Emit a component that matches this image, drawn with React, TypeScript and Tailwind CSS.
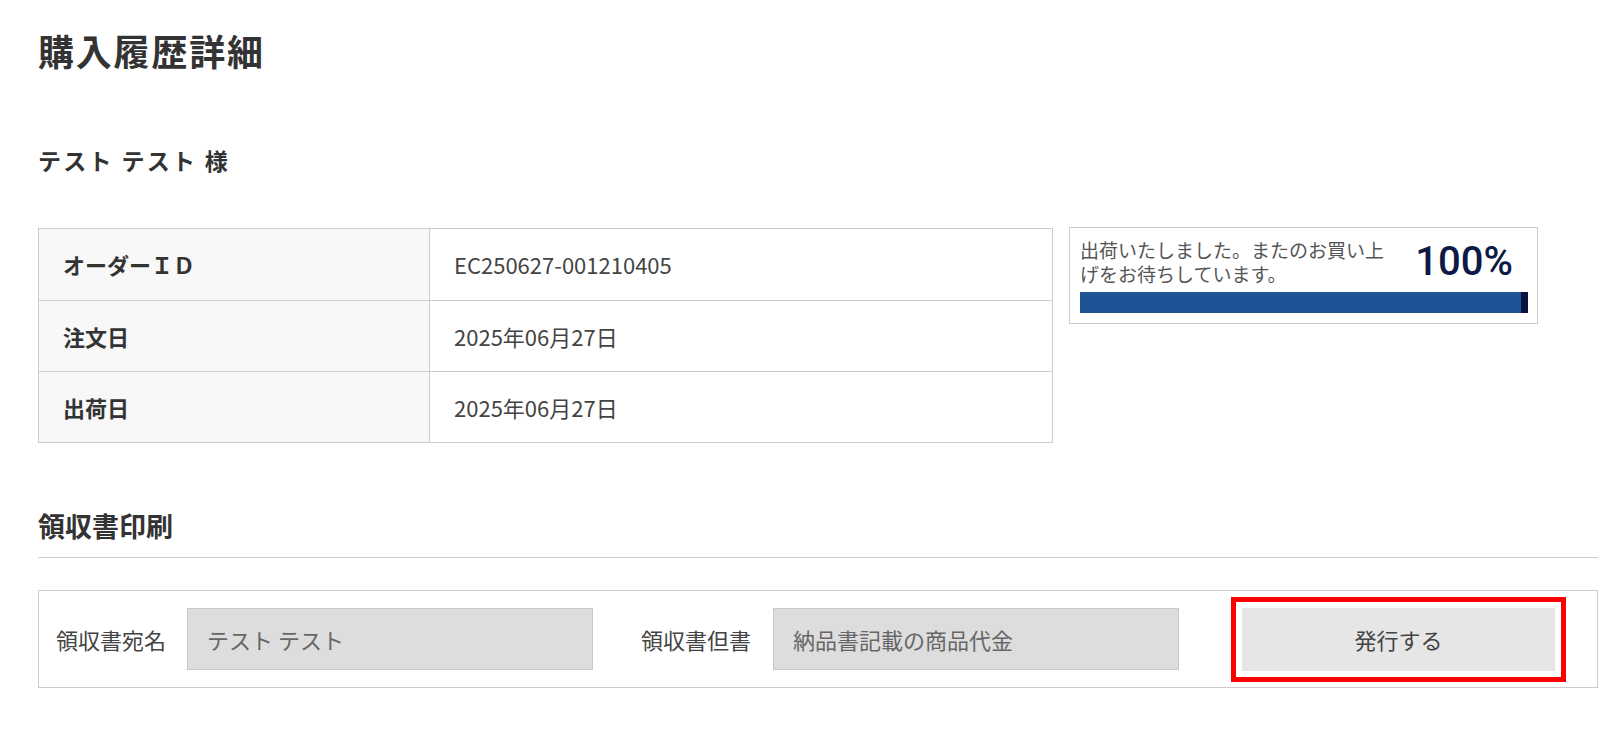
import React from 'react';

// 注文情報
const orderRows = [
  { label: 'オーダーＩＤ', value: 'EC250627-001210405' },
  { label: '注文日', value: '2025年06月27日' },
  { label: '出荷日', value: '2025年06月27日' },
];

const App: React.FC = () => {
  return (
    <div
      className="min-h-screen bg-white text-[#333]"
      style={{ fontFamily: '"Noto Sans CJK JP", "Noto Sans", sans-serif' }}
    >
      <div className="ml-[38px] w-[1560px]">
        <h1 className="pt-[23px] text-[36px] font-bold leading-[54px] tracking-[0.05em] text-[#333]">
          購入履歴詳細
        </h1>

        <h2 className="mt-[66px] text-[23px] font-bold leading-[34px] tracking-[0.1em] text-[#333]">
          テスト テスト 様
        </h2>

        {/* 注文情報テーブル */}
        <div className="mt-[51px] flex items-start gap-[16px]">
          <div className="w-[1015px] border border-[#cccccc]">
            {orderRows.map((row, i) => (
              <div
                key={row.label}
                className={`flex h-[71px] items-center ${i > 0 ? 'border-t border-[#cccccc]' : ''}`}
              >
                <div className="flex h-full w-[391px] items-center border-r border-[#cccccc] bg-[#f8f8f8] pl-[24px] text-[22px] font-bold text-[#333]">
                  {row.label}
                </div>
                <div className="pl-[24px] text-[22px] text-[#444]">{row.value}</div>
              </div>
            ))}
          </div>

          {/* 進捗 */}
          <div className="-mt-[1px] h-[97px] w-[469px] border border-[#cccccc] px-[10px] pt-[10px]">
            <div className="flex items-center justify-between">
              <p className="w-[312px] text-[19px] leading-[24px] text-[#555]">
                出荷いたしました。またのお買い上げをお待ちしています。
              </p>
              <span
                className="pr-[14px] text-[40px] font-medium leading-[40px] text-[#0d1a45]"
                style={{ fontFamily: 'Roboto, "Noto Sans CJK JP", sans-serif' }}
              >
                100%
              </span>
            </div>
            <div className="mt-[6px] flex h-[21px] w-[448px]">
              <div className="flex-1 bg-[#1e5496]" />
              <div className="w-[7px] bg-[#0a1440]" />
            </div>
          </div>
        </div>

        {/* 領収書印刷 */}
        <h3 className="mt-[63px] border-b border-[#cccccc] pb-[11px] text-[27px] font-bold leading-[40px] text-[#333]">
          領収書印刷
        </h3>

        <div className="mt-[32px] flex h-[98px] items-center border border-[#cccccc] pl-[17px]">
          <span className="text-[22px] text-[#444]">領収書宛名</span>
          <div className="ml-[21px] flex h-[62px] w-[406px] items-center border border-[#c8c8c8] bg-[#dddddd] pl-[19px] text-[22px] text-[#666]">
            テスト テスト
          </div>
          <span className="ml-[48px] text-[22px] text-[#444]">領収書但書</span>
          <div className="ml-[22px] flex h-[62px] w-[406px] items-center border border-[#c8c8c8] bg-[#dddddd] pl-[19px] text-[22px] text-[#666]">
            納品書記載の商品代金
          </div>
          <button
            type="button"
            className="ml-[63px] h-[63px] w-[313px] bg-[#e6e6e6] text-[22px] text-[#444] outline-[5px] outline-offset-[6px] outline-[#ff0000]"
          >
            発行する
          </button>
        </div>
      </div>
    </div>
  );
};

export default App;
